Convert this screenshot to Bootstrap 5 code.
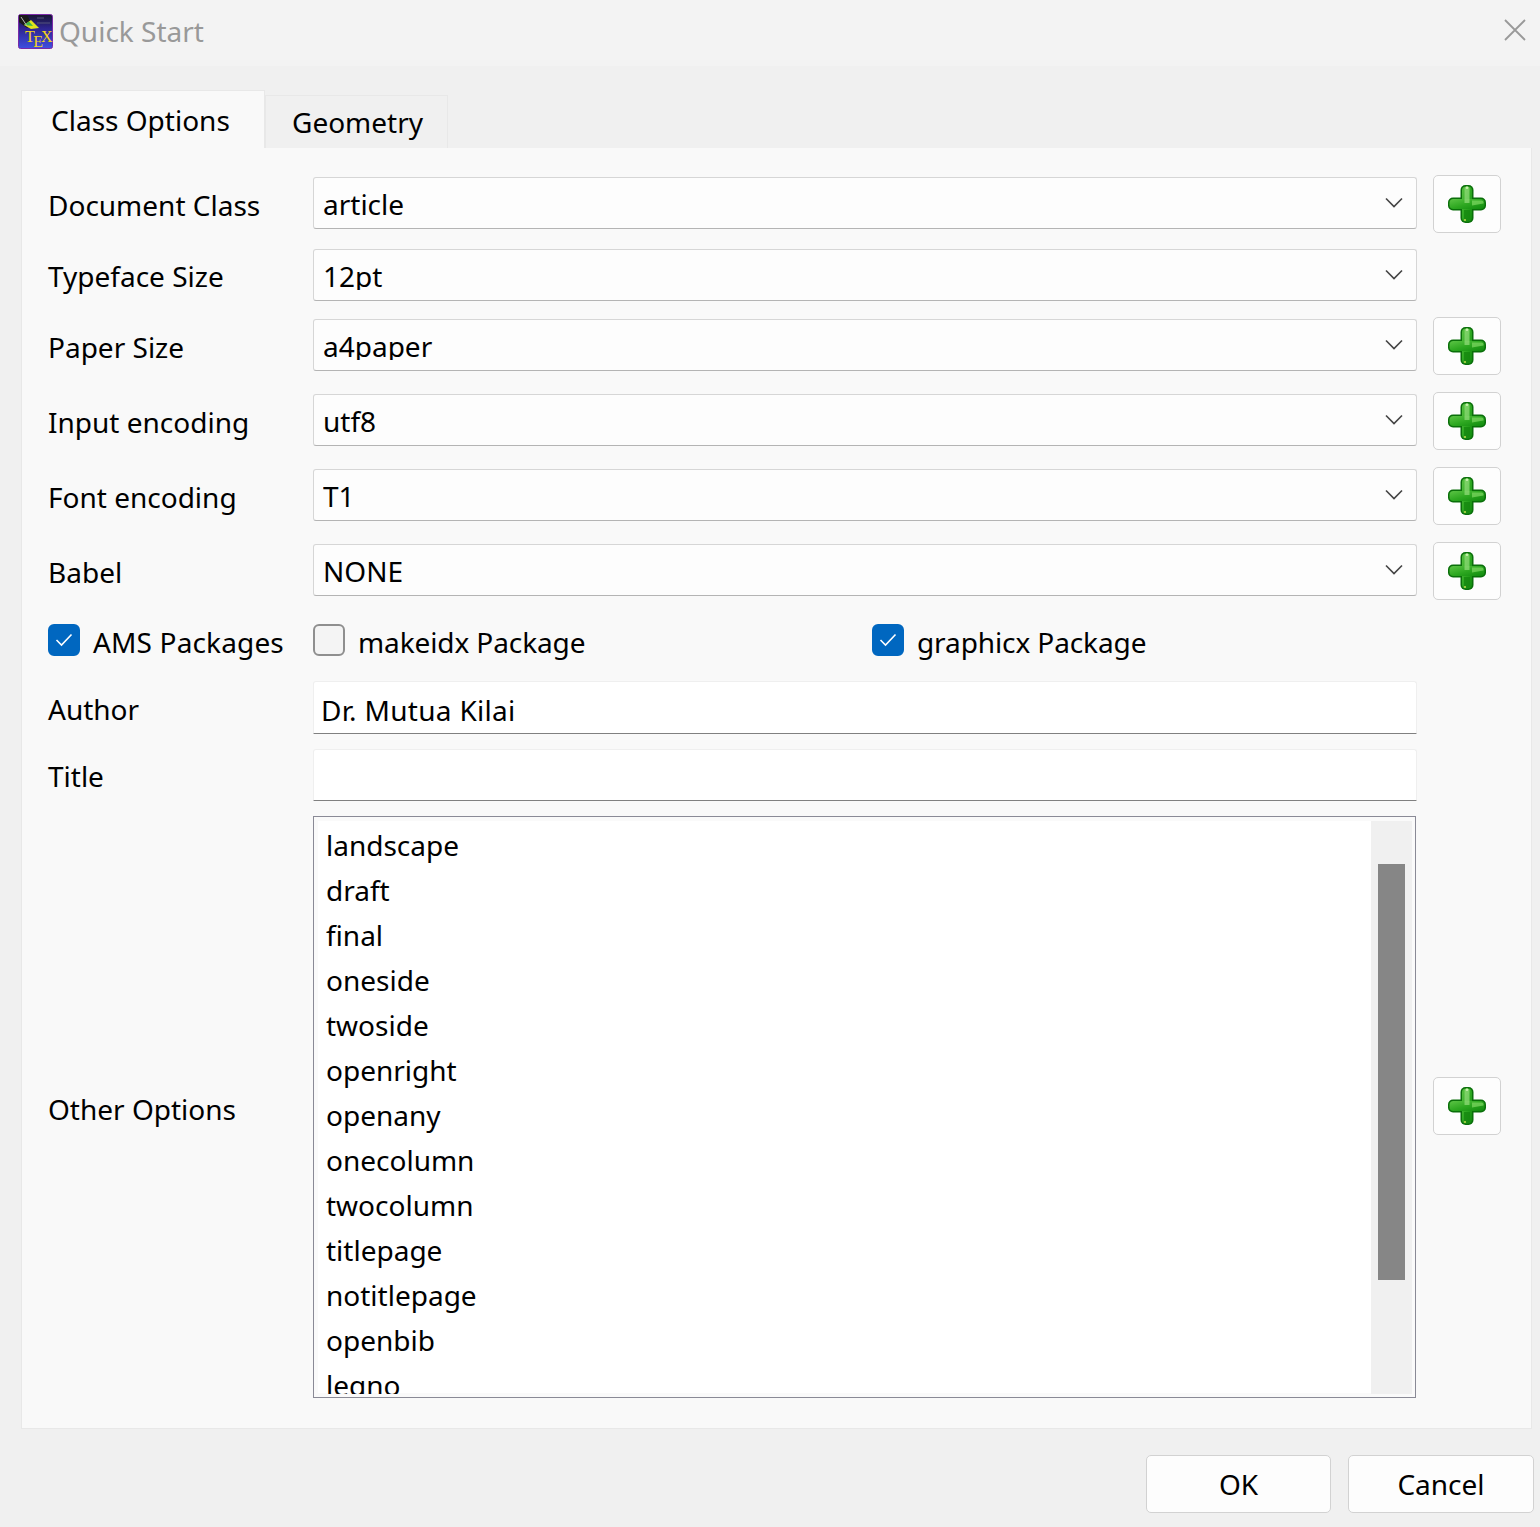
<!DOCTYPE html>
<html lang="en">
<head>
<meta charset="utf-8">
<title>Quick Start</title>
<link href="https://cdn.jsdelivr.net/npm/bootstrap@5.3.0/dist/css/bootstrap.min.css" rel="stylesheet">
<style>
html,body{margin:0;height:100%;}
body{background:#f0f0f0;font-family:"Noto Sans","Open Sans",sans-serif;font-size:28px;color:#000;overflow:hidden;}
.win-bar{height:66px;background:#f3f3f3;padding-left:18px;}
.win-logo{margin-top:-3px;flex:none;}
.win-title{color:#999;font-size:28px;margin-left:5px;line-height:1;margin-top:-5px;}
.win-close{width:22px;height:22px;margin-right:14px;margin-top:-6px;}
.tab-area{padding:24px 8px 0 21px;}
.nav-tabs.qs-tabs{border-bottom:0;align-items:flex-end;height:58px;}
.qs-tabs .nav-link{font-size:28px;line-height:1;color:#000;border-radius:0;margin:0;background:#f0f0f0;border:1px solid #e8e8e8;border-bottom:0;height:53px;width:183px;padding:12px 0 0 26px;}
.qs-tabs .nav-link.active{background:#f9f9f9;color:#000;border-color:#e8e8e8;height:58px;width:244px;padding:15px 0 0 29px;}
.qs-pane{background:#f9f9f9;border:1px solid #e8e8e8;border-top:0;height:1281px;padding:27px 31px 0 26px;}
.opt-row{display:flex;align-items:center;}
.opt-label{width:265px;flex:none;line-height:1;padding-top:2px;}
.qs-pick.form-select{width:1104px;height:52px;flex:none;border-radius:3px;border:1px solid #d6d6d6;border-bottom-color:#b4b4b4;background-color:#fdfdfd;font-size:28px;line-height:1;color:#000;padding:1px 40px 0 9px;box-shadow:none;
background-image:url("data:image/svg+xml,%3Csvg xmlns='http://www.w3.org/2000/svg' width='18' height='11'%3E%3Cpath d='M1 1.500l8 8 8-8' fill='none' stroke='%23444' stroke-width='1.600'/%3E%3C/svg%3E");background-position:right 13px top 19px;background-size:18px 11px;}
.r-a .qs-pick,.r-c .qs-pick,.r-d .qs-pick{margin-top:-2px;}
.qs-add.btn{width:68px;height:58px;margin-left:16px;flex:none;padding:0;background:#fdfdfd;border:1px solid #d2d2d2;border-radius:5px;display:flex;align-items:center;justify-content:center;}
.r-a{height:58px;margin-bottom:16px;}
.r-b{height:52px;margin-bottom:16px;}
.r-c{height:58px;margin-bottom:17px;}
.r-d{height:58px;margin-bottom:24px;}
.r-check{height:32px;margin-bottom:25px;}
.qs-check{display:flex;align-items:center;margin:0;padding:0;min-height:0;}
.qs-check .form-check-input{width:32px;height:32px;margin:0 13px 0 0;float:none;border-radius:6px;background-color:#f4f4f4;border:2px solid #8f8f8f;box-shadow:none;}
.qs-check .form-check-input:checked{background-color:#0067c0;border-color:#0067c0;background-size:18px 14px;background-image:url("data:image/svg+xml,%3Csvg xmlns='http://www.w3.org/2000/svg' width='18' height='14'%3E%3Cpath d='M1.500 7l5 5 10-10.500' fill='none' stroke='%23fff' stroke-width='1.600'/%3E%3C/svg%3E");}
.qs-check .form-check-label{line-height:1;padding-top:4px;white-space:nowrap;letter-spacing:-.1px;}
.qs-check.ck-first .form-check-label{letter-spacing:.15px;}
.ck-first{width:265px;flex:none;}
.ck-second{width:559px;flex:none;}
.qs-field.form-control{width:1104px;height:53px;flex:none;border:1px solid #efefef;border-bottom:1px solid #808080;border-radius:3px 3px 0 0;background:#fff;font-size:28px;line-height:1;color:#000;padding:4px 7px 0;box-shadow:none;letter-spacing:.3px;}
.r-e{height:53px;margin-bottom:15px;}
.r-f{height:52px;margin-bottom:15px;}
.r-f .qs-field.form-control{height:52px;}
.r-list{height:582px;}
.r-list .opt-label{padding-top:4px;}
.qs-listbox{width:1103px;height:582px;flex:none;border:1px solid #8a8a96;background:#fff;padding:4px 3px 3px 4px;display:flex;background-clip:padding-box;box-shadow:inset 0 0 0 4px #fafafa;}
.qs-items{flex:1;overflow:hidden;min-width:0;flex-wrap:nowrap;}
.qs-items .list-group-item{flex:none;border:0;background:transparent;padding:0 0 0 8px;height:45px;line-height:1;font-size:28px;padding-top:10px;color:#000;}
.qs-track{width:41px;flex:none;background:#f0f0f0;padding:43px 7px 0;}
.qs-thumb{height:416px;background:#868686;}
.list-add{margin-top:-2px;margin-left:17px!important;}
.qs-foot{padding:26px 0 0;margin-right:-2px;}
.qs-btn.btn{height:58px;background:#fdfdfd;border:1px solid #d2d2d2;border-radius:5px;font-size:28px;line-height:1;color:#000;padding:0 0 1px;}
.ok-btn{width:185px;margin-right:17px;}
.cancel-btn{width:186px;}
</style>
</head>
<body>
<svg width="0" height="0" class="position-absolute">
  <defs>
    <linearGradient id="gA" x1="0" y1="0" x2="1" y2="1"><stop offset="0" stop-color="#5cc445"/><stop offset=".5" stop-color="#2ea821"/><stop offset="1" stop-color="#0f8a0d"/></linearGradient>
    <symbol id="plus" viewBox="0 0 38 38">
      <rect x="12.500" y="0" width="13" height="38" rx="5" fill="#0a6f0a"/>
      <rect x="0" y="12.500" width="38" height="13" rx="5" fill="#0a6f0a"/>
      <rect x="14" y="1.500" width="10" height="35" rx="4" fill="url(#gA)"/>
      <rect x="1.500" y="14" width="35" height="10" rx="4" fill="url(#gA)"/>
      <path d="M16.500 4a2.500 2.500 0 0 1 5 0V18h-5z" fill="#a3e48a" opacity=".6"/>
      <path d="M24 15.500h9.500a2 2 0 0 1 2 2v1L24 20.500z" fill="#86dc68" opacity=".65"/>
      <path d="M16 25h6v8a3 3 0 0 1-6 0z" fill="#15870f" opacity=".8"/>
      <circle cx="19" cy="2.800" r="1.300" fill="#c8f0ae"/>
      <circle cx="17" cy="35" r="1.100" fill="#b6d84a"/>
    </symbol>
  </defs>
</svg>

<header class="win-bar d-flex align-items-center">
  <svg class="win-logo" width="36" height="36" viewBox="0 0 36 36">
    <defs>
      <linearGradient id="lg" x1="0" y1="0" x2="0" y2="1"><stop offset="0" stop-color="#181530"/><stop offset=".4" stop-color="#2e2490"/><stop offset="1" stop-color="#3f4fe0"/></linearGradient>
    </defs>
    <rect x=".5" y=".5" width="34" height="34" rx="2" fill="url(#lg)" stroke="#7a2aa8"/>
    <path d="M1 1h8l5 9-5 4L1 8z" fill="#1a1a1a"/>
    <path d="M6 11l7-5 8 8-8 1z" fill="#dfe31a"/>
    <path d="M6 11l5-3.500 4 4.500z" fill="#3ab54a"/>
    <path d="M3 3l6 9" stroke="#bbb" stroke-width="1"/>
    <path d="M19 4h7M19 9h7M26 9h6" stroke="#55557a" stroke-width="1"/>
    <text x="7" y="28" font-family="Liberation Serif" font-size="16" fill="#f2d21a">T<tspan dx="-1.500" dy="5">E</tspan><tspan dx="-2" dy="-5">X</tspan></text>
  </svg>
  <span class="win-title">Quick Start</span>
  <svg class="win-close ms-auto" viewBox="0 0 22 22"><path d="M1 1l20 20M21 1L1 21" stroke="#999" stroke-width="1.800" fill="none"/></svg>
</header>

<main class="tab-area">
  <ul class="nav nav-tabs qs-tabs">
    <li class="nav-item"><a class="nav-link active" href="#">Class Options</a></li>
    <li class="nav-item"><a class="nav-link" href="#">Geometry</a></li>
  </ul>
  <section class="qs-pane">
    <div class="opt-row r-a"><span class="opt-label">Document Class</span><select class="form-select qs-pick"><option>article</option></select><button class="btn qs-add"><svg width="38" height="38"><use href="#plus"/></svg></button></div>
    <div class="opt-row r-b"><span class="opt-label">Typeface Size</span><select class="form-select qs-pick"><option>12pt</option></select></div>
    <div class="opt-row r-c"><span class="opt-label">Paper Size</span><select class="form-select qs-pick"><option>a4paper</option></select><button class="btn qs-add"><svg width="38" height="38"><use href="#plus"/></svg></button></div>
    <div class="opt-row r-c"><span class="opt-label">Input encoding</span><select class="form-select qs-pick"><option>utf8</option></select><button class="btn qs-add"><svg width="38" height="38"><use href="#plus"/></svg></button></div>
    <div class="opt-row r-c"><span class="opt-label">Font encoding</span><select class="form-select qs-pick"><option>T1</option></select><button class="btn qs-add"><svg width="38" height="38"><use href="#plus"/></svg></button></div>
    <div class="opt-row r-d"><span class="opt-label">Babel</span><select class="form-select qs-pick"><option>NONE</option></select><button class="btn qs-add"><svg width="38" height="38"><use href="#plus"/></svg></button></div>
    <div class="opt-row r-check">
      <div class="form-check qs-check ck-first"><input class="form-check-input" type="checkbox" id="c1" checked><label class="form-check-label" for="c1">AMS Packages</label></div>
      <div class="form-check qs-check ck-second"><input class="form-check-input" type="checkbox" id="c2"><label class="form-check-label" for="c2">makeidx Package</label></div>
      <div class="form-check qs-check"><input class="form-check-input" type="checkbox" id="c3" checked><label class="form-check-label" for="c3">graphicx Package</label></div>
    </div>
    <div class="opt-row r-e"><span class="opt-label">Author</span><input class="form-control qs-field" value="Dr. Mutua Kilai"></div>
    <div class="opt-row r-f"><span class="opt-label">Title</span><input class="form-control qs-field"></div>
    <div class="opt-row r-list">
      <span class="opt-label">Other Options</span>
      <div class="qs-listbox">
        <ul class="list-group list-group-flush qs-items">
          <li class="list-group-item">landscape</li>
          <li class="list-group-item">draft</li>
          <li class="list-group-item">final</li>
          <li class="list-group-item">oneside</li>
          <li class="list-group-item">twoside</li>
          <li class="list-group-item">openright</li>
          <li class="list-group-item">openany</li>
          <li class="list-group-item">onecolumn</li>
          <li class="list-group-item">twocolumn</li>
          <li class="list-group-item">titlepage</li>
          <li class="list-group-item">notitlepage</li>
          <li class="list-group-item">openbib</li>
          <li class="list-group-item">legno</li>
        </ul>
        <div class="qs-track"><div class="qs-thumb"></div></div>
      </div>
      <button class="btn qs-add list-add"><svg width="38" height="38"><use href="#plus"/></svg></button>
    </div>
  </section>
  <footer class="qs-foot d-flex justify-content-end">
    <button class="btn qs-btn ok-btn">OK</button>
    <button class="btn qs-btn cancel-btn">Cancel</button>
  </footer>
</main>
<script src="https://cdn.jsdelivr.net/npm/bootstrap@5.3.0/dist/js/bootstrap.bundle.min.js"></script>
</body>
</html>
